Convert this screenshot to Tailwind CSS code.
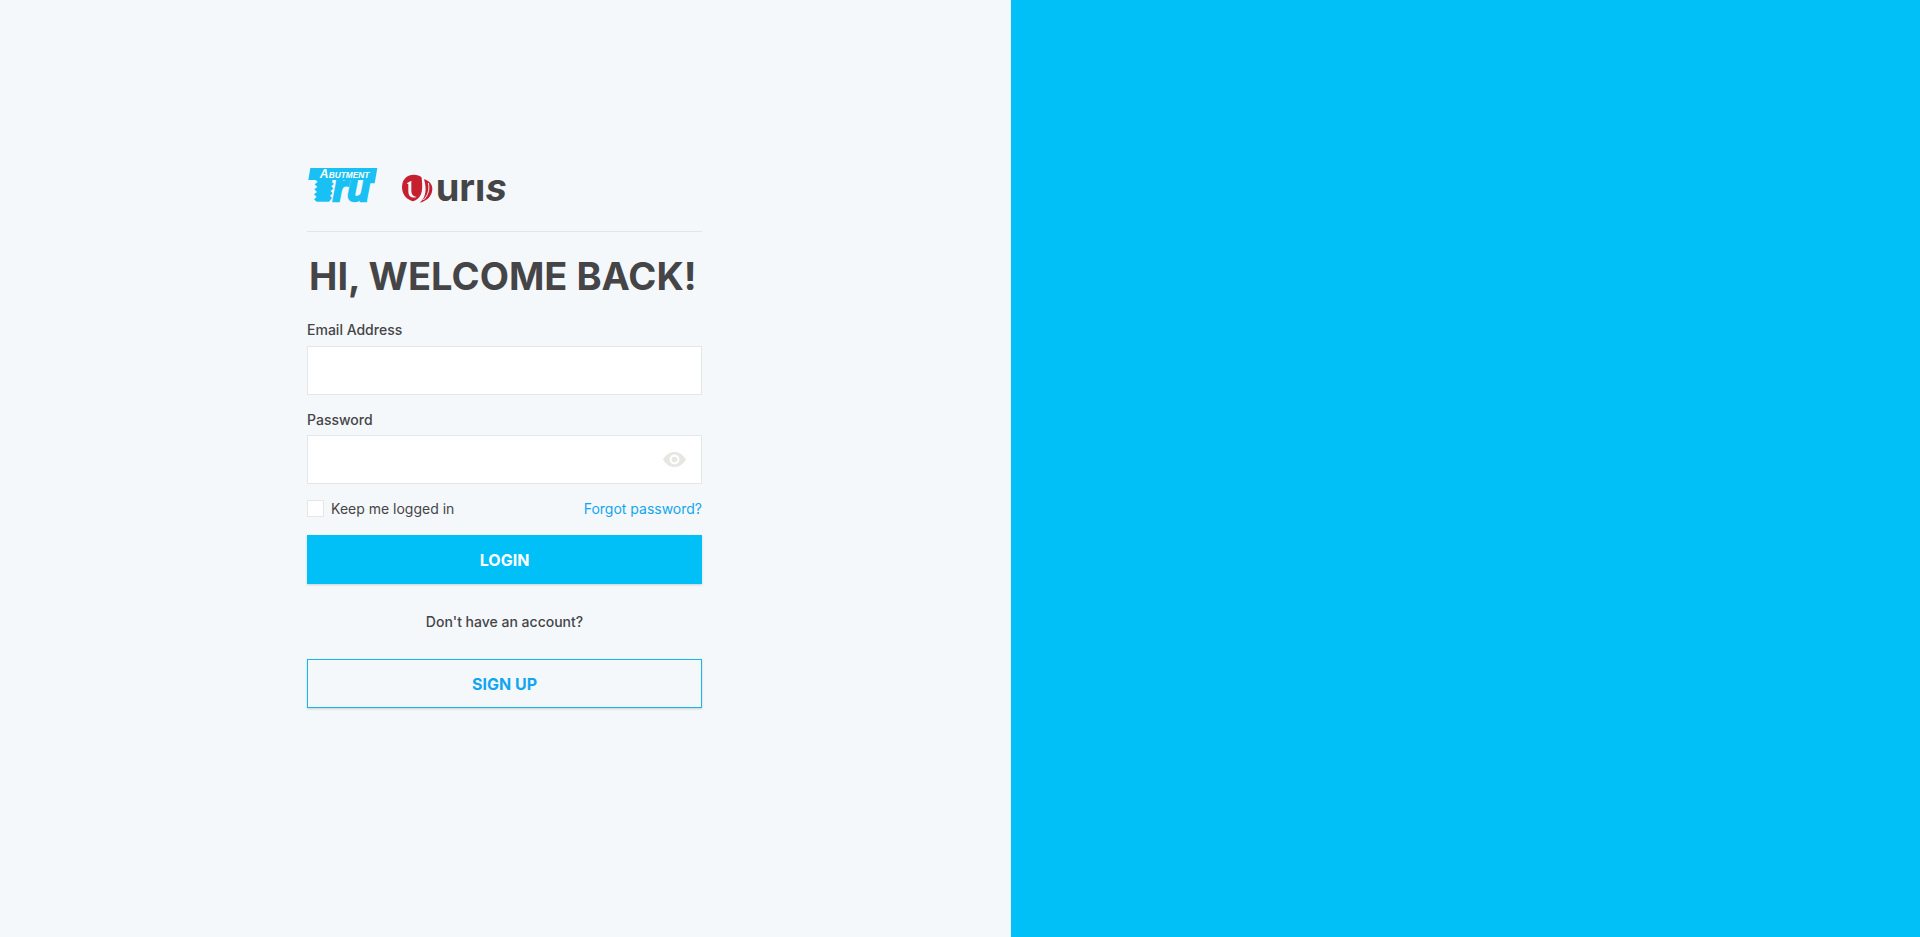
<!DOCTYPE html>
<html lang="en">
<head>
<meta charset="utf-8">
<meta name="viewport" content="width=device-width, initial-scale=1">
<title>Login</title>
<script src="https://cdn.jsdelivr.net/npm/@tailwindcss/browser@4"></script>
</head>
<body class="flex min-h-screen bg-[#f4f8fb] font-['Inter','Liberation_Sans',sans-serif] text-sm text-[#454547]">
<main class="flex w-full justify-center pt-[168px] pb-16 lg:w-[52.66%]">
  <form class="mr-[2px] w-full max-w-[395px]">
    <div class="flex h-16 items-start gap-6 border-b border-[#dfe5e8]">
      <svg class="h-[35px] w-[71px] overflow-visible" viewBox="0 0 213 105" role="img" aria-label="Abutment Tru">
        <path fill="#19c0f3" d="M10 0H211L203 46H176L178 36H77L75 42L81 48L73 54L79 62L71 69L77 76L69 83L75 90L66 101H29L21 94L29 87L21 79L30 72L22 64L31 57L23 49L32 42L26 36H4Z"/>
        <text x="38" y="31" fill="#fff" font-family="Liberation Sans" font-weight="700" font-style="italic" font-size="36">A</text>
        <text x="65" y="31" fill="#fff" font-family="Liberation Sans" font-weight="700" font-style="italic" font-size="25">BUTMENT</text>
        <text x="77" y="98" fill="#19c0f3" stroke="#19c0f3" stroke-width="7" font-family="Liberation Sans" font-weight="700" font-style="italic" font-size="112">ru</text>
      </svg>
      <svg class="mt-[6px] h-[31px] w-[108px] overflow-visible" viewBox="0 0 324 93" role="img" aria-label="Uris">
        <path fill="#c51f30" d="M20 5C34 0 51 2 59 11C61 30 62 48 57 61C52 72 44 79 33 82C13 77 0 60 0 39C0 23 8 10 20 5Z"/>
        <path fill="#f4f8fb" d="M14 28L28 20V51C28 61 33 67 44 69C32 74 19 68 19 53V31Z"/>
        <path fill="#c51f30" d="M66 16C82 20 92 32 91 46C90 66 75 82 53 86C72 73 75 44 66 16Z"/>
        <path fill="none" stroke="#f4f8fb" stroke-width="3" d="M79 27C84 47 77 66 64 78"/>
        <text x="101" y="80" fill="#454547" font-family="Inter" font-weight="700" font-size="114">urı<tspan font-style="italic">s</tspan></text>
      </svg>
    </div>
    <h1 class="mt-6 pl-0.5 text-[38px] leading-10 font-bold whitespace-nowrap">HI, WELCOME BACK!</h1>
    <label for="email" class="mt-6 block text-sm leading-5 font-medium">Email Address</label>
    <input id="email" type="email" class="mt-[6px] block h-[49px] w-full border border-[#e5e6e5] bg-white px-4 outline-none">
    <label for="password" class="mt-[15px] block text-sm leading-5 font-medium">Password</label>
    <div class="relative mt-[5px]">
      <input id="password" type="password" class="block h-[49px] w-full border border-[#e5e6e5] bg-white pr-12 pl-4 outline-none">
      <button type="button" aria-label="Show password" class="absolute top-[17px] right-4">
        <svg class="h-[15px] w-[23px]" viewBox="0 0 23 15">
          <path fill="#e6e7e2" fill-rule="evenodd" d="M0 7.5C3 2.500 7 0 11.500 0S20 2.500 23 7.500C20 12.500 16 15 11.500 15S3 12.500 0 7.500ZM11.500 2.500A5 5 0 1 0 11.500 12.500A5 5 0 1 0 11.500 2.500Z"/>
          <circle cx="11.500" cy="7.500" r="2.800" fill="#e6e7e2"/>
        </svg>
      </button>
    </div>
    <div class="mt-4 flex h-[17px] items-center justify-between">
      <label for="keep" class="flex items-center gap-[7px]">
        <input id="keep" type="checkbox" class="size-[17px] appearance-none border border-[#e5e6e5] bg-white checked:bg-[#00c0f8]">
        Keep me logged in
      </label>
      <a href="#" class="text-[#12a6ef]">Forgot password?</a>
    </div>
    <button type="submit" class="mt-[18px] block h-[49px] w-full bg-[#00c0f8] text-base font-bold text-white shadow-[0_1px_2px_rgba(0,0,0,0.16)]">LOGIN</button>
    <p class="mt-7 text-center leading-5 font-medium">Don't have an account?</p>
    <button type="button" class="mt-[27px] block h-[49px] w-full border border-[#16b8ec] bg-[#f4f8fb] text-base font-bold text-[#12a6ef] shadow-[0_1px_2px_rgba(0,0,0,0.16)]">SIGN UP</button>
  </form>
</main>
<aside class="hidden flex-1 bg-[#00c0f8] lg:block"></aside>
</body>
</html>
